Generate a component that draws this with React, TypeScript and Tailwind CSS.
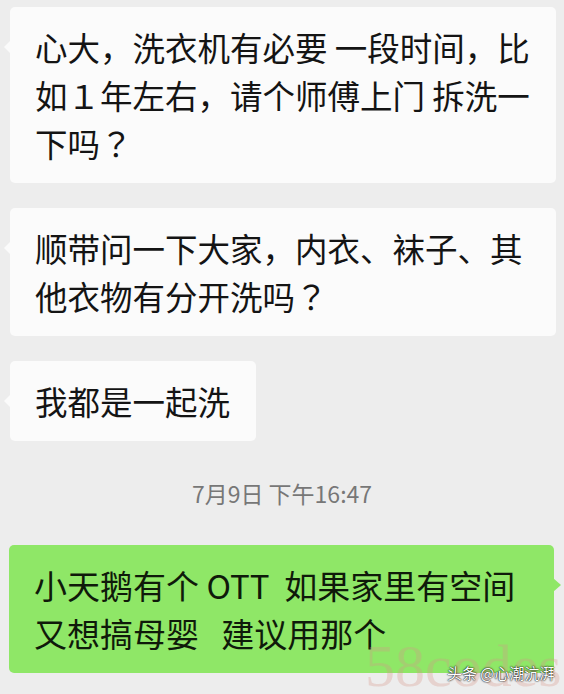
import React from "react";

const font = { fontFamily: '"Noto Sans CJK SC", "Noto Sans", sans-serif' };

function Q() {
  return <span style={{ fontFamily: '"Noto Sans CJK TC", sans-serif' }}>？</span>;
}

function LeftTail() {
  return (
    <svg className="absolute left-[-7px] top-[33px]" width="8" height="14" viewBox="0 0 8 14">
      <path d="M8 0 L1 7 L8 14 Z" fill="#fbfbfb" />
    </svg>
  );
}

function RightTail() {
  return (
    <svg className="absolute right-[-8px] top-[33px]" width="9" height="14" viewBox="0 0 9 14">
      <path d="M0 0 L8 7 L0 14 Z" fill="#8fe767" />
    </svg>
  );
}

export default function App() {
  return (
    <div
      className="relative w-[564px] h-[694px] overflow-hidden bg-[#ededed] pt-[7px] text-[#141414]"
      style={font}
    >
      <div className="flex flex-col items-start gap-[25px] pl-[10px]">
        <div className="relative w-[546px] rounded-[5px] bg-[#fbfbfb] pl-[25px] pr-[16px] py-[16px] text-[32.5px] leading-[48px] whitespace-nowrap">
          <LeftTail />
          <div>心大，洗衣机有必要 一段时间，比</div>
          <div>如１年左右，请个师傅上门 拆洗一</div>
          <div>
            下吗<Q />
          </div>
        </div>
        <div className="relative w-[546px] rounded-[5px] bg-[#fbfbfb] pl-[25px] pr-[16px] py-[16px] text-[32.5px] leading-[48px] whitespace-nowrap">
          <LeftTail />
          <div>顺带问一下大家，内衣、袜子、其</div>
          <div>
            他衣物有分开洗吗<Q />
          </div>
        </div>
        <div className="relative rounded-[5px] bg-[#fbfbfb] pl-[25px] pr-[26px] py-[16px] text-[32.5px] leading-[48px] whitespace-nowrap">
          <LeftTail />
          <div>我都是一起洗</div>
        </div>
      </div>

      <div className="mt-[37px] flex justify-center text-[23px] leading-[30px] text-[#777777]">
        7月9日 下午16:47
      </div>

      <div className="mt-[37px] pl-[9px]">
        <div className="relative w-[545px] rounded-[5px] bg-[#8fe767] pl-[25px] pr-[16px] py-[16px] text-[33px] leading-[48px] whitespace-nowrap text-[#0f1a0a]">
          <RightTail />
          <div>小天鹅有个 OTT&nbsp;&nbsp;如果家里有空间</div>
          <div>又想搞母婴&nbsp;&nbsp;&nbsp;建议用那个</div>
        </div>
      </div>

      <div
        className="absolute left-[365px] top-[626px] text-[60px] leading-[80px] text-[rgba(215,150,135,0.3)] whitespace-nowrap"
        style={{ fontFamily: '"Liberation Serif", serif' }}
      >
        58codes
      </div>
      <div className="absolute left-[447px] top-[663px] text-[15px] leading-[20px] text-white whitespace-nowrap [text-shadow:0_0_2px_#000,0_0_1px_#000]">
        头条 @心潮沆湃
      </div>
    </div>
  );
}
